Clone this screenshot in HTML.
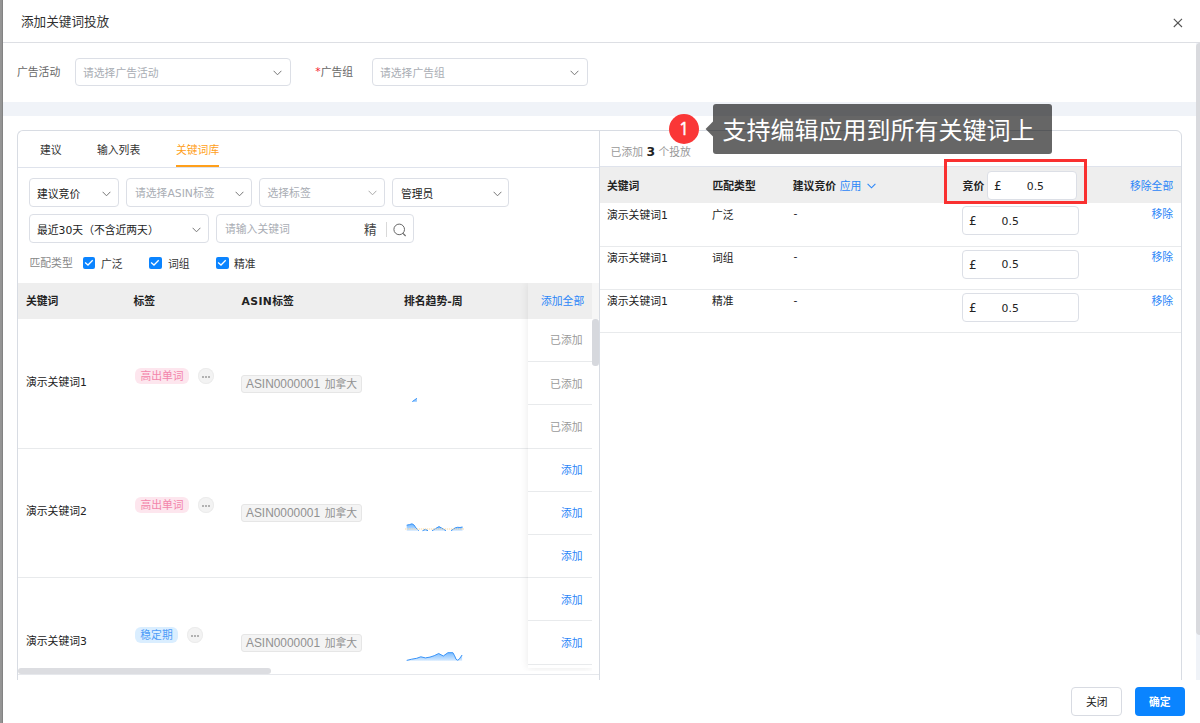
<!DOCTYPE html>
<html lang="zh-CN">
<head>
<meta charset="utf-8">
<title>添加关键词投放</title>
<style>
*{box-sizing:border-box;margin:0;padding:0}
html,body{width:1200px;height:723px;overflow:hidden;background:#fff}
body{position:relative;font-family:"DejaVu Sans","Noto Sans CJK SC",sans-serif;font-size:10.8px;color:#222;line-height:1}
.abs{position:absolute}
.t{position:absolute;white-space:nowrap;line-height:18px;height:16px}
.b{font-weight:bold}
.blue{color:#2b86f8}
.gray{color:#999}
.ph{color:#a9adb4}
/* backdrop strip */
#strip{left:0;top:0;width:3px;height:723px;background:linear-gradient(90deg,#969696 0,#939393 55%,#7a7a7a 100%)}
#modal{left:3px;top:0;width:1197px;height:723px;background:#fff;border-top-left-radius:5px}
#hdrline{left:3px;top:42px;width:1197px;height:1px;background:#dddfe4}
#band{left:3px;top:102px;width:1193px;height:14px;background:#f0f3f8}
.sel{position:absolute;height:28px;border:1px solid #dcdfe6;border-radius:4px;background:#fff}
.sel .t{top:5.5px}
.chev{position:absolute;width:9px;height:6px}
/* panels */
#lp{left:17px;top:130px;width:583px;height:560px;border:1px solid #d8dce3;border-radius:6px 0 0 0;border-right:none}
#rp{left:599px;top:130px;width:583px;height:560px;border:1px solid #d8dce3;border-radius:0 6px 0 0}
#foot{left:3px;top:680px;width:1197px;height:43px;background:#fff}

.ln{position:absolute;height:1px;background:#e8eaec}
.tag{position:absolute;height:16px;border-radius:6px;font-size:10.8px;line-height:17.7px;overflow:hidden;text-align:center;white-space:nowrap}
.tag.pink{background:#fde6ee;color:#f385ab}
.tag.sky{background:#daeeff;color:#4d9cf8}
.dots{position:absolute;width:16px;height:16px;border-radius:50%;background:#f3f3f3;box-shadow:inset 0 0 0 1px #ececec}
.dots i{position:absolute;top:7.6px;width:2px;height:2px;border-radius:50%;background:#9c9c9c}
.asin{position:absolute;height:17.5px;width:121px;border:1px solid #e6e6e6;background:#f4f4f4;border-radius:3px;color:#919191;font-family:"Liberation Sans","Noto Sans CJK SC",sans-serif;font-size:10.8px;line-height:16.4px;padding-left:4px;white-space:nowrap}
.asin b{font-weight:normal;font-size:11.9px;margin-right:1.4px}
.cb{position:absolute;width:12px;height:12px;border-radius:2px;background:#0b84ff}
.inp{position:absolute;height:29px;border:1px solid #dcdfe6;border-radius:4px;background:#fff}
.r{text-align:right}
</style>
</head>
<body>
<div id="strip" class="abs"></div>
<div id="modal" class="abs"></div>
<div id="hdrline" class="abs"></div>
<div id="band" class="abs"></div>

<!-- header -->
<div class="t" style="left:21px;top:13px;font-size:12.6px;color:#303030">添加关键词投放</div>
<svg class="abs" style="left:1173px;top:18px" width="10" height="10" viewBox="0 0 10 10"><path d="M0.8 0.8L9 9M9 0.8L0.8 9" stroke="#555" stroke-width="1.1" fill="none"/></svg>

<!-- form row -->
<div class="t" style="left:17px;top:64px;color:#666">广告活动</div>
<div class="sel" style="left:75px;top:58px;width:215.5px"><div class="t ph" style="left:7px">请选择广告活动</div><svg class="chev" style="left:197px;top:11px" viewBox="0 0 9 6"><path d="M0.6 0.8L4.5 4.8L8.4 0.8" fill="none" stroke="#777" stroke-width="1"/></svg></div>
<div class="t" style="left:315.3px;top:64px;color:#666"><span style="color:#f5222d;position:relative;top:-1px">*</span>广告组</div>
<div class="sel" style="left:372px;top:58px;width:215.5px"><div class="t ph" style="left:7px">请选择广告组</div><svg class="chev" style="left:197px;top:11px" viewBox="0 0 9 6"><path d="M0.6 0.8L4.5 4.8L8.4 0.8" fill="none" stroke="#777" stroke-width="1"/></svg></div>

<!-- panels -->
<div id="lp" class="abs"></div>
<div id="rp" class="abs"></div>


<!-- ===== left panel content ===== -->
<div class="t" style="left:40px;top:141.5px;color:#333">建议</div>
<div class="t" style="left:97px;top:141.5px;color:#333">输入列表</div>
<div class="t" style="left:176px;top:141.5px;color:#ff9f1a">关键词库</div>
<div class="abs" style="left:18px;top:167px;width:581px;height:1px;background:#dfe3ec"></div>
<div class="abs" style="left:176px;top:165.4px;width:43px;height:1.6px;background:#ff9f1a"></div>

<!-- filter row 1 -->
<div class="sel" style="left:29px;top:178px;width:90px;height:29px"><div class="t" style="left:7px;top:6.5px;color:#222">建议竞价</div><svg class="chev" style="left:71.5px;top:11.5px" viewBox="0 0 9 6"><path d="M0.6 0.8L4.5 4.8L8.4 0.8" fill="none" stroke="#777" stroke-width="1"/></svg></div>
<div class="sel" style="left:126px;top:178px;width:126px;height:29px"><div class="t ph" style="left:8px;top:6px">请选择ASIN标签</div><svg class="chev" style="left:107.5px;top:11.5px" viewBox="0 0 9 6"><path d="M0.6 0.8L4.5 4.8L8.4 0.8" fill="none" stroke="#777" stroke-width="1"/></svg></div>
<div class="sel" style="left:259px;top:178px;width:126px;height:29px"><div class="t ph" style="left:7.5px;top:6px">选择标签</div><svg class="chev" style="left:108px;top:10.5px" viewBox="0 0 9 6"><path d="M0.6 0.8L4.5 4.8L8.4 0.8" fill="none" stroke="#aaa" stroke-width="1"/></svg></div>
<div class="sel" style="left:392px;top:178px;width:117px;height:29px"><div class="t" style="left:8px;top:6.5px;color:#222">管理员</div><svg class="chev" style="left:99.5px;top:11.5px" viewBox="0 0 9 6"><path d="M0.6 0.8L4.5 4.8L8.4 0.8" fill="none" stroke="#777" stroke-width="1"/></svg></div>

<!-- filter row 2 -->
<div class="sel" style="left:29px;top:214px;width:180px;height:29px"><div class="t" style="left:7px;top:6.5px;color:#222">最近30天（不含近两天）</div><svg class="chev" style="left:161.5px;top:12px" viewBox="0 0 9 6"><path d="M0.6 0.8L4.5 4.8L8.4 0.8" fill="none" stroke="#777" stroke-width="1"/></svg></div>
<div class="sel" style="left:216px;top:214px;width:198px;height:29px"><div class="t ph" style="left:8px;top:6px">请输入关键词</div><div class="t" style="left:147px;top:6px;font-size:12.6px;color:#444">精</div><div class="abs" style="left:169px;top:6.5px;width:1px;height:15px;background:#d9d9d9"></div><svg class="abs" style="left:175px;top:7px" width="16" height="16" viewBox="0 0 16 16"><circle cx="7.2" cy="7.4" r="5.3" fill="none" stroke="#666" stroke-width="1"/><path d="M11 11.3L13.6 14" stroke="#666" stroke-width="1.1" fill="none"/></svg></div>

<!-- match type -->
<div class="t" style="left:29.5px;top:255px;color:#888">匹配类型</div>
<div class="cb" style="left:83px;top:257px"><svg width="12" height="12" viewBox="0 0 12 12" style="position:absolute;left:0;top:0"><path d="M2.1 5.4L5 8L9.7 3.3" fill="none" stroke="#fff" stroke-width="1.3"/></svg></div>
<div class="t" style="left:101px;top:255.5px;color:#333">广泛</div>
<div class="cb" style="left:149px;top:257px;width:13px"><svg width="12" height="12" viewBox="0 0 12 12" style="position:absolute;left:0;top:0"><path d="M2.1 5.4L5 8L9.7 3.3" fill="none" stroke="#fff" stroke-width="1.3"/></svg></div>
<div class="t" style="left:168px;top:255.5px;color:#333">词组</div>
<div class="cb" style="left:216px;top:257px;width:13px"><svg width="12" height="12" viewBox="0 0 12 12" style="position:absolute;left:0;top:0"><path d="M2.1 5.4L5 8L9.7 3.3" fill="none" stroke="#fff" stroke-width="1.3"/></svg></div>
<div class="t" style="left:234px;top:255.5px;color:#333">精准</div>

<!-- table header -->
<div class="abs" style="left:18px;top:283px;width:574px;height:35.5px;background:#eeeeee"></div>
<div class="abs" style="left:592px;top:283px;width:7px;height:35.5px;background:#f6f6f6"></div>
<div class="t b" style="left:26px;top:293px;color:#222">关键词</div>
<div class="t b" style="left:133.5px;top:293px;color:#222">标签</div>
<div class="t b" style="left:241.5px;top:293px;color:#222"><span style="letter-spacing:.4px">ASIN</span>标签</div>
<div class="t b" style="left:404px;top:293px;color:#222">排名趋势-周</div>

<!-- rows -->
<div class="ln" style="left:18px;top:447.5px;width:574px"></div>
<div class="ln" style="left:18px;top:577px;width:574px"></div>

<div class="t" style="left:26px;top:374px;color:#222">演示关键词1</div>
<div class="tag pink" style="left:135px;top:368px;width:54px">高出单词</div>
<div class="dots" style="left:198px;top:368px"><i style="left:4.1px"></i><i style="left:7px"></i><i style="left:9.9px"></i></div>
<div class="asin" style="left:241px;top:375px"><b>ASIN0000001 </b>加拿大</div>

<div class="t" style="left:26px;top:503px;color:#222">演示关键词2</div>
<div class="tag pink" style="left:135px;top:497px;width:54px">高出单词</div>
<div class="dots" style="left:198px;top:497px"><i style="left:4.1px"></i><i style="left:7px"></i><i style="left:9.9px"></i></div>
<div class="asin" style="left:241px;top:504px"><b>ASIN0000001 </b>加拿大</div>

<div class="t" style="left:26px;top:632.7px;color:#222">演示关键词3</div>
<div class="tag sky" style="left:135px;top:627px;width:43px">稳定期</div>
<div class="dots" style="left:187px;top:627px"><i style="left:4.1px"></i><i style="left:7px"></i><i style="left:9.9px"></i></div>
<div class="asin" style="left:241px;top:634px"><b>ASIN0000001 </b>加拿大</div>

<!-- sparklines -->
<svg class="abs" style="left:400px;top:390px" width="70" height="20" viewBox="400 390 70 20"><path d="M412.3 401.8L416.9 398.3L416.9 401.8Z" fill="#8cc4ff"/><path d="M412.3 401.6L416.9 398.3" stroke="#3893f8" stroke-width="1" fill="none"/></svg>
<svg class="abs" style="left:400px;top:515px" width="70" height="22" viewBox="400 515 70 22">
<defs><linearGradient id="g1" x1="0" y1="0" x2="0" y2="1"><stop offset="0" stop-color="#6db5ff"/><stop offset="1" stop-color="#cfe6ff"/></linearGradient></defs>
<path d="M406.7 525.2L409.5 524.6L412 523.8L414 525L416 528L418.8 530.7H406.7Z" fill="url(#g1)"/>
<path d="M406.7 525.2L409.5 524.6L412 523.8L414 525L416 528L418.8 530.7" stroke="#3893f8" stroke-width="1" fill="none"/>
<path d="M422.5 530.7L425.3 529.3L428 530.7Z" fill="#9ccbff"/><path d="M422.5 530.7L425.3 529.3L428 530.7" stroke="#2f8ff5" stroke-width="1" fill="none"/>
<path d="M432 530.7L436 528.3L439 526.6L442 528.3L446 530.7Z" fill="url(#g1)"/><path d="M432 530.7L436 528.3L439 526.6L442 528.3L446 530.7" stroke="#3893f8" stroke-width="1" fill="none"/>
<path d="M451 530.7L455 528L457.5 527.3L460 527.5L462.5 527V530.7Z" fill="url(#g1)"/><path d="M451 530.7L455 528L457.5 527.3L460 527.5L462.5 527" stroke="#3893f8" stroke-width="1" fill="none"/>
<path d="M405 529H464" stroke="#ffdca8" stroke-opacity="0.75" stroke-width="1.3" stroke-dasharray="1.2 0.8" fill="none"/>
</svg>
<svg class="abs" style="left:400px;top:645px" width="70" height="20" viewBox="400 645 70 20">
<defs><linearGradient id="g2" x1="0" y1="0" x2="0" y2="1"><stop offset="0" stop-color="#7bbcff"/><stop offset="1" stop-color="#d6eaff"/></linearGradient></defs>
<path d="M406.7 660.4L411.7 659.2L416.7 658.3L420.8 656.8L425.4 657.9L430 657.1L434.2 655.7L438.7 653.5L443.3 656L447.9 652.7L452.9 652.7L454.6 655.8L457.1 660.4L459.5 659L462.1 655V660.7H406.7Z" fill="url(#g2)"/>
<path d="M406.7 660.4L411.7 659.2L416.7 658.3L420.8 656.8L425.4 657.9L430 657.1L434.2 655.7L438.7 653.5L443.3 656L447.9 652.7L452.9 652.7L454.6 655.8L456 659.2Q457.1 661 459 659.5L462.1 655" stroke="#3893f8" stroke-width="1" fill="none" stroke-linejoin="round"/>
</svg>

<!-- fixed right column -->
<div class="abs" style="left:508px;top:283px;width:84px;height:388px;overflow:hidden"><div class="abs" style="left:20px;top:0;width:64px;height:385px;background:#fff;box-shadow:0 0 8px rgba(0,0,0,0.09)"></div></div>
<div class="abs" style="left:528px;top:283px;width:64px;height:35.5px;background:#eeeeee"></div>
<div class="t blue" style="left:541px;top:293px">添加全部</div>
<div class="ln" style="left:528px;top:361.2px;width:64px"></div>
<div class="ln" style="left:528px;top:404.3px;width:64px"></div>
<div class="ln" style="left:528px;top:447.5px;width:64px"></div>
<div class="ln" style="left:528px;top:490.7px;width:64px"></div>
<div class="ln" style="left:528px;top:533.8px;width:64px"></div>
<div class="ln" style="left:528px;top:577px;width:64px"></div>
<div class="ln" style="left:528px;top:620.2px;width:64px"></div>
<div class="ln" style="left:528px;top:664px;width:64px"></div>
<div class="t r gray" style="left:528px;width:54.5px;top:332px;color:#9a9a9a">已添加</div>
<div class="t r gray" style="left:528px;width:54.5px;top:375.5px;color:#9a9a9a">已添加</div>
<div class="t r gray" style="left:528px;width:54.5px;top:418.5px;color:#9a9a9a">已添加</div>
<div class="t r blue" style="left:528px;width:54.5px;top:462px">添加</div>
<div class="t r blue" style="left:528px;width:54.5px;top:505px">添加</div>
<div class="t r blue" style="left:528px;width:54.5px;top:548px">添加</div>
<div class="t r blue" style="left:528px;width:54.5px;top:591.5px">添加</div>
<div class="t r blue" style="left:528px;width:54.5px;top:634.5px">添加</div>

<!-- scrollbars in left table -->
<div class="abs" style="left:592px;top:319px;width:6.5px;height:47px;border-radius:3.2px;background:#d6d8dd"></div>
<div class="abs" style="left:18px;top:668px;width:253px;height:6px;border-radius:3px;background:#dcdde1"></div>
<div class="abs" style="left:18px;top:674px;width:581px;height:1px;background:#e6e8ec"></div>


<!-- ===== right panel content ===== -->
<div class="t" style="left:610.6px;top:143px;color:#999">已添加 <span class="b" style="color:#222;font-size:12.4px">3</span> 个投放</div>
<div class="abs" style="left:600px;top:166px;width:581px;height:36.7px;background:#eeeeee;border-top:1px solid #dfe3ec"></div>
<div class="t b" style="left:607px;top:178px;color:#222">关键词</div>
<div class="t b" style="left:712.5px;top:178px;color:#222">匹配类型</div>
<div class="t b" style="left:792.8px;top:178px;color:#222">建议竞价 <span class="blue" style="font-weight:normal">应用</span></div>
<svg class="chev" style="left:867px;top:183px" viewBox="0 0 9 6"><path d="M0.6 0.8L4.5 4.8L8.4 0.8" fill="none" stroke="#2b86f8" stroke-width="1.1"/></svg>
<div class="t b" style="left:962.6px;top:178px;color:#222">竞价</div>
<div class="inp" style="left:987px;top:171px;width:90px"><div class="t" style="left:6px;top:5.3px;color:#222;font-size:12px">£</div><div class="t" style="left:38.8px;top:5.5px;color:#222">0.5</div></div>
<div class="t blue" style="left:1130px;top:178px">移除全部</div>

<div class="t" style="left:607px;top:206.5px;color:#222">演示关键词1</div>
<div class="t" style="left:712px;top:206.5px;color:#222">广泛</div>
<div class="t" style="left:793.5px;top:205.0px;color:#222">-</div>
<div class="inp" style="left:962px;top:206px;width:117px"><div class="t" style="left:6px;top:5.3px;color:#222;font-size:12px">£</div><div class="t" style="left:38.6px;top:5.5px;color:#222">0.5</div></div>
<div class="t r blue" style="left:1100px;width:73px;top:206px">移除</div>
<div class="ln" style="left:600px;top:245.8px;width:581px"></div>

<div class="t" style="left:607px;top:249.5px;color:#222">演示关键词1</div>
<div class="t" style="left:712px;top:249.5px;color:#222">词组</div>
<div class="t" style="left:793.5px;top:248.0px;color:#222">-</div>
<div class="inp" style="left:962px;top:249.5px;width:117px"><div class="t" style="left:6px;top:5.3px;color:#222;font-size:12px">£</div><div class="t" style="left:38.6px;top:5.5px;color:#222">0.5</div></div>
<div class="t r blue" style="left:1100px;width:73px;top:249px">移除</div>
<div class="ln" style="left:600px;top:289px;width:581px"></div>

<div class="t" style="left:607px;top:293px;color:#222">演示关键词1</div>
<div class="t" style="left:712px;top:293px;color:#222">精准</div>
<div class="t" style="left:793.5px;top:291.5px;color:#222">-</div>
<div class="inp" style="left:962px;top:293px;width:117px"><div class="t" style="left:6px;top:5.3px;color:#222;font-size:12px">£</div><div class="t" style="left:38.6px;top:5.5px;color:#222">0.5</div></div>
<div class="t r blue" style="left:1100px;width:73px;top:292.5px">移除</div>
<div class="ln" style="left:600px;top:332.3px;width:581px"></div>

<!-- annotation -->
<div class="abs" style="left:944px;top:159px;width:143px;height:45px;border:3px solid #f93030"></div>
<div class="abs" style="left:713px;top:104px;width:339px;height:49.7px;border-radius:3px;background:rgba(0,0,0,0.6)"></div>
<svg class="abs" style="left:704px;top:120px" width="10" height="20" viewBox="0 0 10 20"><path d="M1.6 9L9 1.6V16.4Z" fill="rgba(0,0,0,0.6)"/></svg>
<div class="abs" style="left:722.5px;top:112px;height:34px;line-height:34px;font-size:24px;color:#fff;white-space:nowrap;font-family:'Noto Sans CJK SC',sans-serif">支持编辑应用到所有关键词上</div>
<div class="abs" style="left:669px;top:114px;width:30px;height:30px;border-radius:50%;background:#fa3737;color:#fff;font-size:18px;line-height:30px;text-align:center;font-family:'NanumGothic','Liberation Sans',sans-serif;-webkit-text-stroke:0.55px #fff">1</div>

<div id="foot" class="abs"></div>
<div class="abs" style="left:1071px;top:687px;width:50.5px;height:29px;border:1px solid #d8dbe2;border-radius:4px;background:#fff"></div>
<div class="t" style="left:1086px;top:693.5px;color:#222">关闭</div>
<div class="abs" style="left:1135px;top:687px;width:50px;height:29px;border-radius:4px;background:#0a84ff"></div>
<div class="t b" style="left:1149px;top:693.5px;color:#fff">确定</div>
<!-- page scrollbar -->
<div class="abs" style="left:1196px;top:43px;width:4px;height:637px;background:#f0f3f8"></div>
<div class="abs" style="left:1196px;top:43px;width:8px;height:591.5px;border-radius:4px;background:#d9dade"></div>

</body>
</html>
